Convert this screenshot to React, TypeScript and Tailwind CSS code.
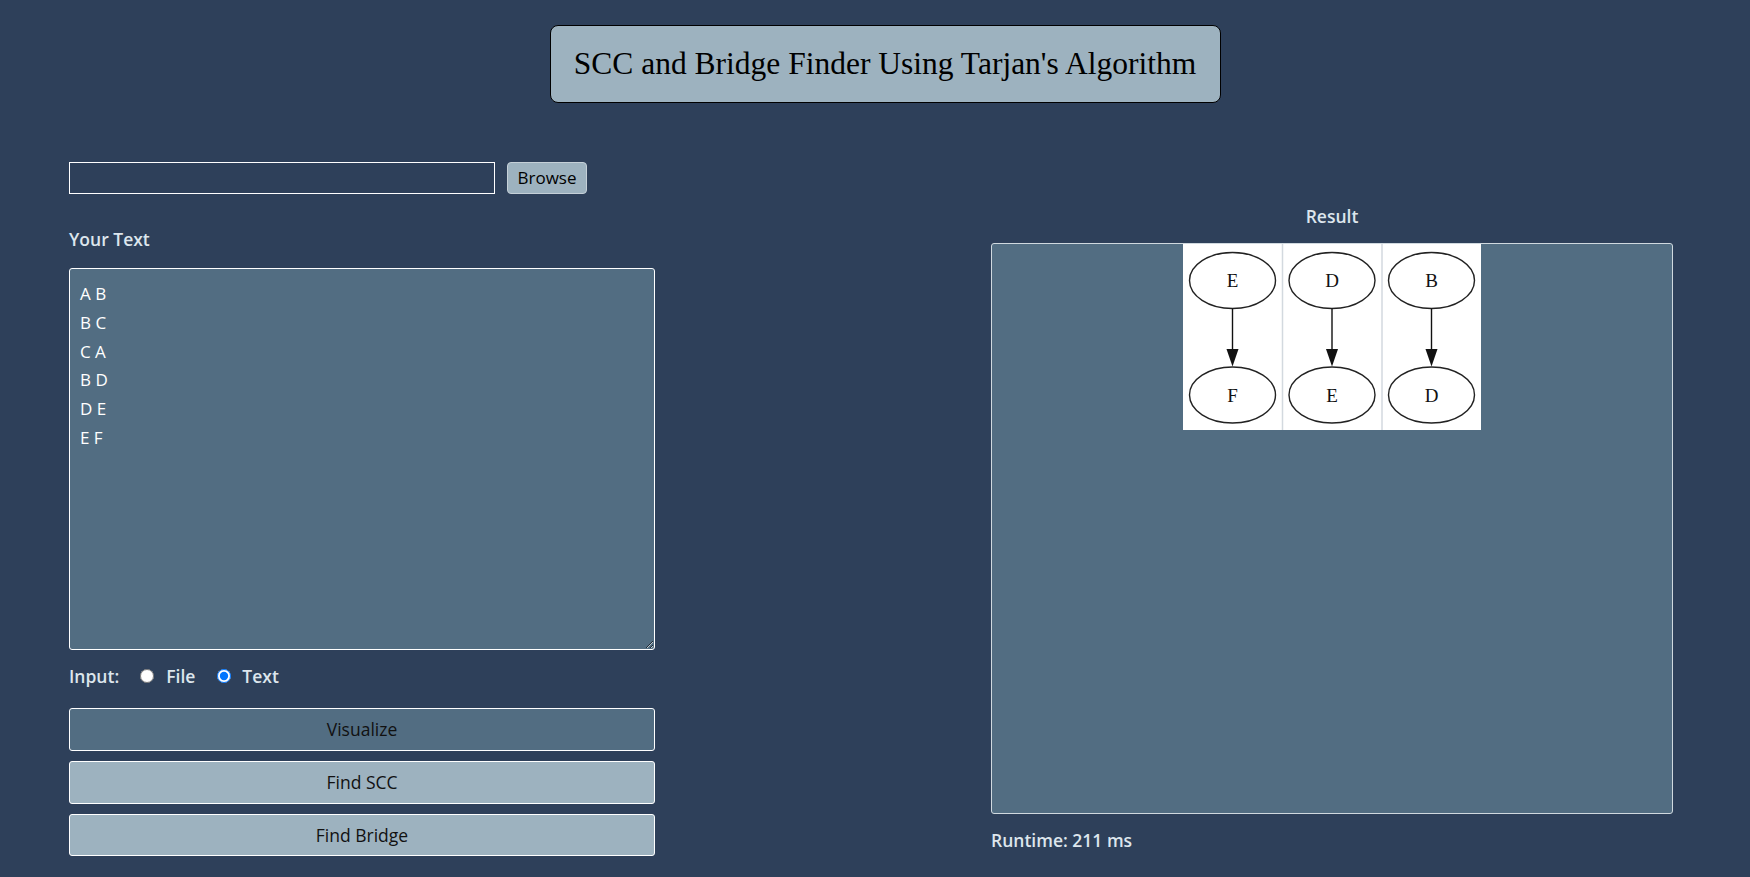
import { useState } from "react"

const edges = ["A B", "B C", "C A", "B D", "D E", "E F"]

// bridges found in the sample graph, drawn like the graphviz output
const bridges: [string, string][] = [
  ["E", "F"],
  ["D", "E"],
  ["B", "D"],
]

function BridgeGraph() {
  return (
    <svg width="298" height="186" viewBox="0 0 298 186" className="block bg-white">
      {bridges.map(([from, to], i) => {
        const cx = 49.5 + i * 99.5
        return (
          <g key={i}>
            {i > 0 && <line x1={i * 99.5} y1="0" x2={i * 99.5} y2="186" stroke="#d3d9df" strokeWidth="1.5" />}
            <ellipse cx={cx} cy="36.5" rx="43" ry="28" fill="none" stroke="#222" strokeWidth="1.4" />
            <text x={cx} y="43" textAnchor="middle" fontFamily="Liberation Serif, serif" fontSize="19" fill="#111">
              {from}
            </text>
            <line x1={cx} y1="64.5" x2={cx} y2="105" stroke="#111" strokeWidth="1.4" />
            <polygon points={`${cx - 6},105 ${cx + 6},105 ${cx},122.5`} fill="#111" />
            <ellipse cx={cx} cy="151" rx="43" ry="28" fill="none" stroke="#222" strokeWidth="1.4" />
            <text x={cx} y="157.5" textAnchor="middle" fontFamily="Liberation Serif, serif" fontSize="19" fill="#111">
              {to}
            </text>
          </g>
        )
      })}
    </svg>
  )
}

export default function App() {
  const [mode, setMode] = useState<"file" | "text">("text")
  const [text, setText] = useState(edges.join("\n"))

  return (
    <div className="min-h-screen bg-[#2e405a] font-['Open_Sans','Noto_Sans',sans-serif] text-[#dde6ed]">
      {/* Title */}
      <header className="flex justify-center pl-5 pt-[25px]">
        <h1 className="flex h-[78px] w-[671px] items-center justify-center rounded-lg border border-black bg-[#9db2bf] font-['Liberation_Serif',serif] text-[31.5px] text-black">
          SCC and Bridge Finder Using Tarjan's Algorithm
        </h1>
      </header>

      <main className="flex pl-[69px] pt-[59px]">
        {/* Input side */}
        <section className="w-[586px]">
          <div className="flex items-center gap-3">
            <input type="text" readOnly className="h-8 w-[426px] border border-white bg-transparent px-2 text-white outline-none" />
            <button className="h-8 w-20 rounded-sm border border-[#c5d0d8] bg-[#9db2bf] text-[17px] text-black">Browse</button>
          </div>

          <label className="mt-[33px] block text-[17.5px] font-semibold leading-6">Your Text</label>

          <textarea
            value={text}
            onChange={(e) => setText(e.target.value)}
            className="mt-[17px] block h-[382px] w-full resize-y rounded-[3px] border border-white bg-[#526d82] px-[10px] pt-[11px] pb-[10px] text-[17px] leading-[28.8px] text-white outline-none"
          />

          <div className="mt-[14px] flex items-center text-[17.5px] font-semibold leading-6">
            <span>Input:</span>
            <label className="ml-[21px] flex items-center">
              <input type="radio" name="mode" checked={mode === "file"} onChange={() => setMode("file")} className="size-[14px]" />
              <span className="ml-3">File</span>
            </label>
            <label className="ml-[22px] flex items-center">
              <input type="radio" name="mode" checked={mode === "text"} onChange={() => setMode("text")} className="size-[14px]" />
              <span className="ml-[11px]">Text</span>
            </label>
          </div>

          <div className="mt-[20px] flex flex-col gap-[10px]">
            <button className="h-[43px] w-full rounded-[3px] border border-white bg-[#526d82] text-[17.5px] text-[#111]">Visualize</button>
            <button className="h-[43px] w-full rounded-[3px] border border-white bg-[#9db2bf] text-[17.5px] text-[#111]">Find SCC</button>
            <button className="h-[42px] w-full rounded-[3px] border border-white bg-[#9db2bf] text-[17.5px] text-[#111]">Find Bridge</button>
          </div>
        </section>

        {/* Result side */}
        <section className="ml-[336px] w-[682px] pt-[42px]">
          <h2 className="text-center text-[17.5px] font-semibold leading-6">Result</h2>
          <div className="mt-[15px] flex h-[571px] justify-center rounded-[3px] border border-[#d0d9df] bg-[#526d82]">
            <BridgeGraph />
          </div>
          <p className="mt-[14px] text-[17.5px] font-semibold leading-6">Runtime: 211 ms</p>
        </section>
      </main>
    </div>
  )
}
